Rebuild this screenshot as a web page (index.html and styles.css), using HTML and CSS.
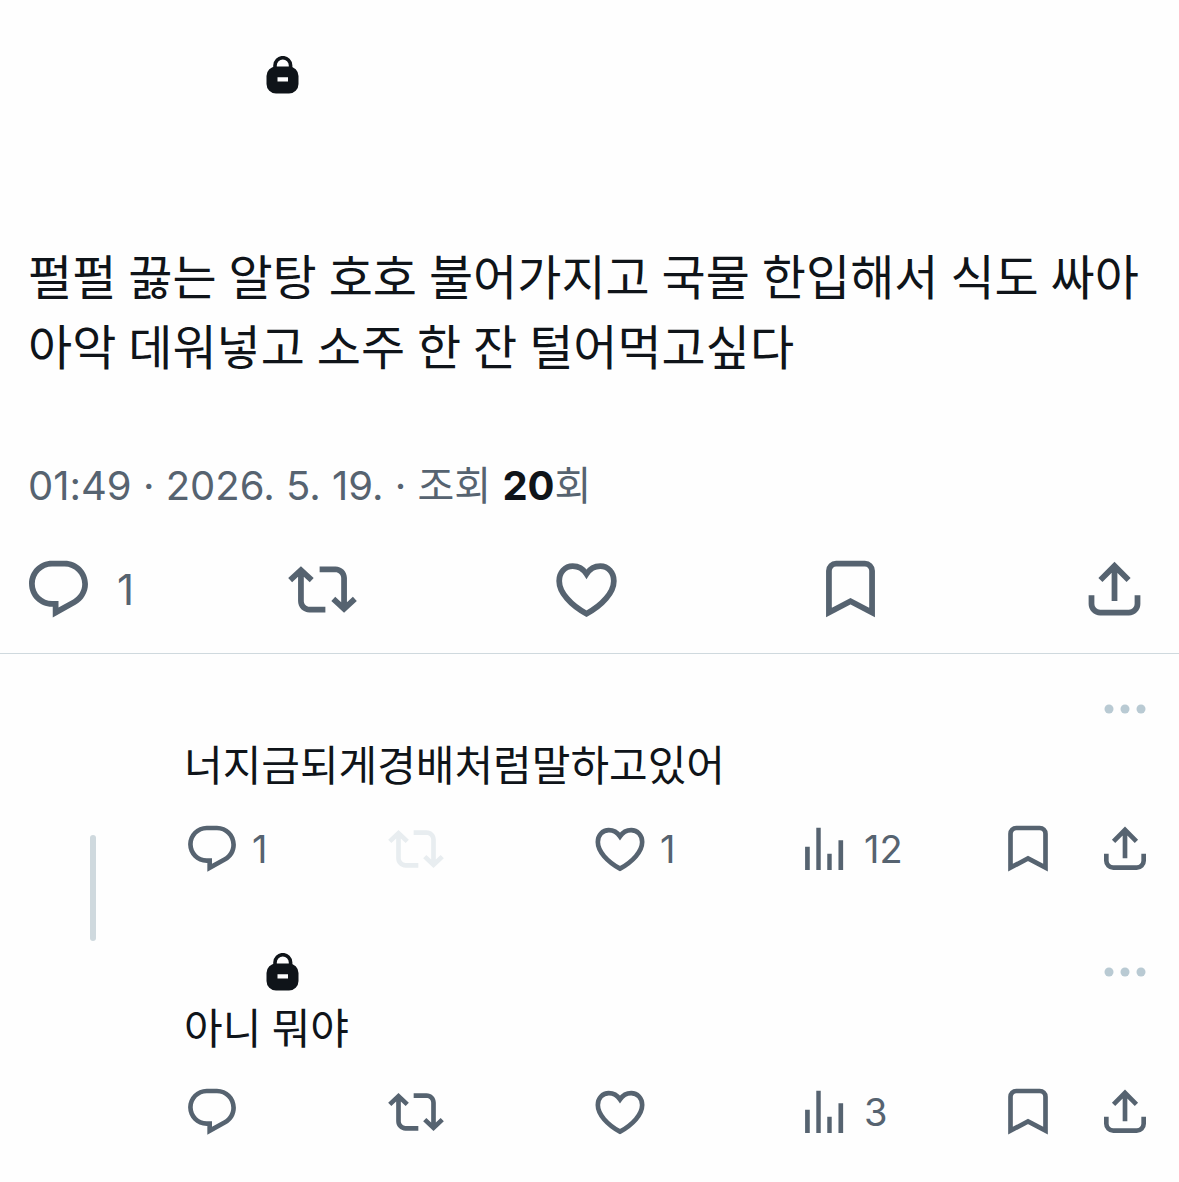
FILE: index.html
```html
<!DOCTYPE html>
<html lang="ko">

<head>
  <meta charset="utf-8">
  <meta name="viewport" content="width=device-width, initial-scale=1">
  <title>Post</title>
  <link rel="stylesheet" href="styles.css">
</head>

<body>
  <!-- icons shared by the post and its replies -->
  <svg class="sprite" aria-hidden="true">
    <symbol id="lock" viewBox="0 0 33 38">
      <path d="M9 12V9.500a7.800 7.800 0 0 1 15.600 0V12" fill="none" stroke="currentColor" stroke-width="3.600" />
      <path fill-rule="evenodd" fill="currentColor" d="M10 10.500h13a9.500 9.500 0 0 1 9.500 9.500v8a9.500 9.500 0 0 1-9.500 9.500H10A9.500 9.500 0 0 1 .5 28V20A9.500 9.500 0 0 1 10 10.500zM11.500 21.300v4.300h10.500v-4.300z" />
    </symbol>
    <symbol id="reply" viewBox="0 0 24 24">
      <path fill="currentColor" d="M1.751 10c0-4.420 3.584-8 8.005-8h4.366c4.490 0 8.129 3.640 8.129 8.130 0 2.960-1.607 5.680-4.196 7.110l-8.054 4.460v-3.690h-.067c-4.490.1-8.183-3.510-8.183-8.010zm8.005-6c-3.317 0-6.005 2.690-6.005 6 0 3.370 2.770 6.080 6.138 6.010l.351-.01h1.761v2.300l5.087-2.810c1.951-1.080 3.163-3.130 3.163-5.360 0-3.390-2.744-6.130-6.129-6.130H9.756z" />
    </symbol>
    <symbol id="repost" viewBox="0 0 24 24">
      <path fill="currentColor" d="M4.500 3.880l4.432 4.140-1.364 1.460L5.500 7.550V16c0 1.100.896 2 2 2H13v2H7.500c-2.209 0-4-1.790-4-4V7.550L1.432 9.480.068 8.020 4.500 3.880zM16.500 6H11V4h5.500c2.209 0 4 1.790 4 4v8.450l2.068-1.930 1.364 1.460-4.432 4.140-4.432-4.140 1.364-1.460 2.068 1.930V8c0-1.100-.896-2-2-2z" />
    </symbol>
    <symbol id="heart" viewBox="0 0 24 24">
      <path class="line" d="M12 6.600C10.800 4.800 9 3.900 7.200 3.900 4.500 3.900 2.500 6.100 2.500 9c0 4 4 8.400 9.500 11.400C17.500 17.400 21.500 13 21.500 9c0-2.900-2-5.100-4.700-5.100C15 3.900 13.200 4.800 12 6.600z" />
    </symbol>
    <symbol id="bookmark" viewBox="0 0 24 24">
      <path class="line" d="M4.500 20V5.500A2.500 2.500 0 0 1 7 3h10a2.500 2.500 0 0 1 2.500 2.500V20L12 16.050z" />
    </symbol>
    <symbol id="share" viewBox="0 0 24 24">
      <path class="line" d="M12 16V3.800M7.100 8.700L12 3.800l4.900 4.900M4 14v3a3 3 0 0 0 3 3h10a3 3 0 0 0 3-3v-3" />
    </symbol>
    <symbol id="views" viewBox="0 0 24 24">
      <path fill="currentColor" d="M3.900 11h2v10h-2zM8.700 2.900h1.900V21H8.700zM13.400 14h1.900v7h-1.900zM18.200 8.200h2V21h-2z" />
    </symbol>
    <symbol id="more" viewBox="0 0 42 10">
      <g fill="currentColor">
        <circle cx="5" cy="5" r="4.500" />
        <circle cx="21" cy="5" r="4.500" />
        <circle cx="37" cy="5" r="4.500" />
      </g>
    </symbol>
  </svg>

  <main>
    <article class="post">
      <div class="post-head">
        <svg class="lock" role="img" aria-label="비공개"><use href="#lock" /></svg>
      </div>
      <p class="post-text">펄펄 끓는 알탕 호호 불어가지고 국물 한입해서 식도 싸아아악 데워넣고 소주 한 잔 털어먹고싶다</p>
      <p class="meta">01:49 · 2026. 5. 19. · 조회 <b>20</b>회</p>
      <div class="actions">
        <button type="button" aria-label="답글"><svg><use href="#reply" /></svg><span>1</span></button>
        <button type="button" aria-label="재게시"><svg><use href="#repost" /></svg></button>
        <button type="button" aria-label="마음에 들어요"><svg><use href="#heart" /></svg></button>
        <button type="button" aria-label="북마크"><svg><use href="#bookmark" /></svg></button>
        <button type="button" aria-label="공유"><svg><use href="#share" /></svg></button>
      </div>
    </article>

    <section class="replies">
      <article class="reply">
        <div class="rail"><div class="thread"></div></div>
        <div class="reply-body">
          <div class="reply-head">
            <button type="button" class="more" aria-label="더 보기"><svg><use href="#more" /></svg></button>
          </div>
          <p class="reply-text">너지금되게경배처럼말하고있어</p>
          <div class="actions small">
            <button type="button" aria-label="답글"><svg><use href="#reply" /></svg><span>1</span></button>
            <button type="button" aria-label="재게시" disabled><svg><use href="#repost" /></svg></button>
            <button type="button" aria-label="마음에 들어요"><svg><use href="#heart" /></svg><span>1</span></button>
            <button type="button" aria-label="조회"><svg><use href="#views" /></svg><span>12</span></button>
            <button type="button" aria-label="북마크"><svg><use href="#bookmark" /></svg></button>
            <button type="button" aria-label="공유"><svg><use href="#share" /></svg></button>
          </div>
        </div>
      </article>

      <article class="reply">
        <div class="rail"></div>
        <div class="reply-body">
          <div class="reply-head">
            <svg class="lock" role="img" aria-label="비공개"><use href="#lock" /></svg>
            <button type="button" class="more" aria-label="더 보기"><svg><use href="#more" /></svg></button>
          </div>
          <p class="reply-text">아니 뭐야</p>
          <div class="actions small">
            <button type="button" aria-label="답글"><svg><use href="#reply" /></svg></button>
            <button type="button" aria-label="재게시"><svg><use href="#repost" /></svg></button>
            <button type="button" aria-label="마음에 들어요"><svg><use href="#heart" /></svg></button>
            <button type="button" aria-label="조회"><svg><use href="#views" /></svg><span>3</span></button>
            <button type="button" aria-label="북마크"><svg><use href="#bookmark" /></svg></button>
            <button type="button" aria-label="공유"><svg><use href="#share" /></svg></button>
          </div>
        </div>
      </article>
    </section>
  </main>
</body>

</html>
```

FILE: styles.css
```css
* {
  box-sizing: border-box;
}

body {
  margin: 0;
  background-color: #fefefe;
  color: #0f1419;
  font-family: Inter, "Noto Sans CJK KR", sans-serif;
}

p {
  margin: 0;
}

button {
  display: flex;
  align-items: center;
  padding: 0;
  border: 0;
  background: none;
  color: inherit;
  font: inherit;
  cursor: pointer;
}

.sprite {
  display: none;
}

.line {
  fill: none;
  stroke: currentColor;
  stroke-width: 2;
}

.lock {
  display: block;
  width: 33px;
  height: 38px;
}

/* main post */
.post {
  border-bottom: 1px solid #cfd9de;
}

.post-head {
  padding: 56px 28px 0 266px;
}

.post-text {
  padding: 150px 28px 0;
  font-family: Roboto, "Noto Sans CJK KR", sans-serif;
  font-size: 48px;
  line-height: 70px;
  word-break: break-all;
}

.meta {
  padding: 74px 28px 0;
  color: #566370;
  font-size: 40px;
  line-height: 56px;
}

.meta b {
  color: #0f1419;
}

/* icon rows */
.actions {
  display: grid;
  grid-template-columns: repeat(4, 1fr) auto;
  padding: 41px 30px 29px 24px;
  color: #566370;
  font-size: 42px;
}

.actions svg {
  width: 69px;
  height: 69px;
}

.actions span {
  margin-left: 24px;
}

.actions.small {
  grid-template-columns: repeat(4, 1fr) auto auto;
  padding: 26px 26px 0 0;
  font-size: 38px;
}

.small svg {
  width: 56px;
  height: 56px;
}

.small span {
  margin-left: 12px;
}

.small button:last-child {
  margin-left: 41px;
}

button:disabled {
  color: #e8edf0;
  cursor: default;
}

/* replies */
.replies {
  padding-top: 24px;
}

.reply {
  display: grid;
  grid-template-columns: 184px 1fr;
}

.rail {
  display: flex;
  justify-content: center;
  padding: 157px 0 0 2px;
}

.thread {
  width: 6px;
  border-radius: 3px;
  background-color: #cfd9de;
}

.reply-body {
  padding: 12px 0 64px;
}

.reply-head {
  display: flex;
  align-items: center;
  height: 38px;
  padding: 0 33px 0 82px;
}

.more {
  margin-left: auto;
  color: #b9cad3;
}

.more svg {
  width: 42px;
  height: 10px;
}

.reply-text {
  padding-top: 11px;
  font-family: Roboto, "Noto Sans CJK KR", sans-serif;
  font-size: 42px;
  line-height: 56px;
}
```
